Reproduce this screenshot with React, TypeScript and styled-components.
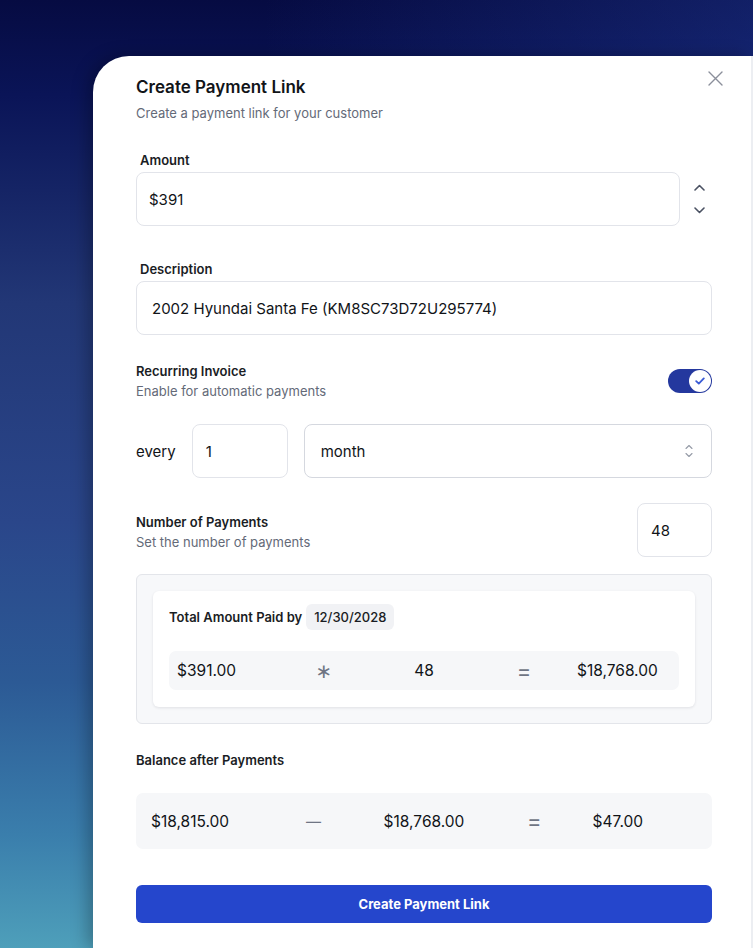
import React from "react";
import styled, { createGlobalStyle } from "styled-components";

const Global = createGlobalStyle`
  html, body {
    margin: 0;
    padding: 0;
  }

  body {
    font-family: Inter, "Noto Sans", sans-serif;
    color: #111418;
  }
`;

const Page = styled.div`
  display: flex;
  box-sizing: border-box;
  height: 948px;
  overflow: hidden;
  padding: 56px 0 0 93px;

  background: linear-gradient(90deg, rgba(10, 20, 60, 0) 35%, rgba(40, 70, 170, 0.35) 100%),
    linear-gradient(180deg, #060b42 0%, #0a1457 10%, #223776 32%, #2a468a 55%, #2c5a95 72%, #3a7eac 88%, #4e9fba 100%);
`;

const Modal = styled.div`
  position: relative;
  flex: 1;
  padding: 20px 39px 0 43px;

  background: #fff;
  border-right: 2px solid #eceef2;
  border-top-left-radius: 36px;
  box-shadow: -6px 0 16px rgba(0, 0, 0, 0.25);
`;

const Close = styled.button`
  position: absolute;
  top: 15px;
  right: 28px;

  display: flex;
  padding: 0;
  border: none;
  background: none;
`;

const Title = styled.div`
  font-size: 17px;
  line-height: 22px;
  font-weight: 600;
  color: #111418;
`;

const Subtitle = styled.div`
  margin-top: 6px;

  font-size: 13px;
  line-height: 18px;
  color: #646a78;
`;

const Label = styled.div<{ $top: number; $indent?: boolean }>`
  margin-top: ${(p) => p.$top}px;
  margin-bottom: 3px;
  padding-left: ${(p) => (p.$indent ? 4 : 0)}px;

  font-size: 13px;
  line-height: 18px;
  font-weight: 600;
  color: #1a1d24;
`;

const Row = styled.div<{ $top?: number; $gap?: number }>`
  display: flex;
  align-items: center;
  justify-content: space-between;
  gap: ${(p) => p.$gap ?? 0}px;
  margin-top: ${(p) => p.$top ?? 0}px;
`;

const Box = styled.div<{ $pad: number; $width?: number; $strong?: boolean }>`
  display: flex;
  align-items: center;
  justify-content: space-between;
  box-sizing: border-box;
  flex: ${(p) => (p.$width ? "none" : 1)};
  width: ${(p) => (p.$width ? `${p.$width}px` : "auto")};
  height: 54px;
  padding: 0 18px 0 ${(p) => p.$pad}px;

  border: 1px solid ${(p) => (p.$strong ? "#d5d8df" : "#e2e4ea")};
  border-radius: 8px;
  font-size: 15px;
  color: #111418;
`;

const Stepper = styled.div`
  display: flex;
  flex-direction: column;
  align-items: center;
  gap: 16px;
  width: 32px;
  padding-left: 7px;
  box-sizing: border-box;
`;

const TextBlock = styled.div<{ $shift?: number }>`
  display: flex;
  flex-direction: column;
  margin-top: ${(p) => p.$shift ?? 0}px;
`;

const BlockTitle = styled.div`
  font-size: 13px;
  line-height: 20px;
  font-weight: 600;
  color: #1a1d24;
`;

const BlockText = styled.div`
  font-size: 13px;
  line-height: 20px;
  color: #646a78;
`;

const Toggle = styled.div`
  display: flex;
  align-items: center;
  justify-content: flex-end;
  box-sizing: border-box;
  width: 44px;
  height: 24px;
  padding: 1px;

  border-radius: 12px;
  background: #24389e;
`;

const Knob = styled.div`
  display: flex;
  align-items: center;
  justify-content: center;
  width: 22px;
  height: 22px;

  border-radius: 50%;
  background: #fff;
`;

const Every = styled.span`
  font-size: 15px;
  color: #111418;
`;

const Summary = styled.div`
  margin-top: 17px;
  padding: 16px;

  background: #f7f8fa;
  border: 1px solid #e3e5ea;
  border-radius: 6px;
`;

const Card = styled.div`
  padding: 13px 16px 17px;

  background: #fff;
  border-radius: 6px;
  box-shadow: 0 1px 3px rgba(16, 24, 40, 0.1);
`;

const CardHead = styled.div`
  display: flex;
  align-items: center;
  gap: 4px;

  font-size: 13px;
  font-weight: 600;
  color: #1a1d24;
`;

const Chip = styled.span`
  display: inline-flex;
  align-items: center;
  height: 26px;
  padding: 0 8px;

  background: #f1f2f5;
  border-radius: 6px;
  font-weight: 500;
`;

const CalcRow = styled.div<{ $h: number; $px: number; $top: number }>`
  display: grid;
  grid-template-columns: repeat(5, 1fr);
  align-items: center;
  height: ${(p) => p.$h}px;
  margin-top: ${(p) => p.$top}px;
  padding: 0 ${(p) => p.$px}px;

  background: #f6f7f9;
  border-radius: 7px;
`;

const Value = styled.span<{ $edge?: boolean }>`
  justify-self: ${(p) => (p.$edge ? "start" : "center")};
  padding-left: ${(p) => (p.$edge ? 3 : 0)}px;

  font-size: 15.5px;
  color: #111418;
`;

const Op = styled.span<{ $glyph?: boolean; $size?: number }>`
  justify-self: center;

  font-family: ${(p) => (p.$glyph ? '"DejaVu Sans", sans-serif' : "Inter, sans-serif")};
  font-size: ${(p) => p.$size ?? 22}px;
  line-height: 1;
  color: #6f7584;
`;

const Submit = styled.button`
  width: 100%;
  height: 38px;
  margin-top: 36px;

  border: none;
  border-radius: 6px;
  background: #2546cc;
  color: #fff;
  font-family: Inter, sans-serif;
  font-size: 13px;
  font-weight: 650;
`;

const Chevron = ({ up }: { up?: boolean }) => (
  <svg width="11" height="7" viewBox="0 0 11 7">
    <path
      d={up ? "M1 6 L5.5 1.5 L10 6" : "M1 1 L5.5 5.5 L10 1"}
      fill="none"
      stroke="#4b5263"
      strokeWidth="1.6"
      strokeLinecap="round"
      strokeLinejoin="round"
    />
  </svg>
);

export default function App() {
  return (
    <Page>
      <Global />
      <Modal>
        <Close aria-label="close">
          <svg width="15" height="15" viewBox="0 0 15 15">
            <path d="M1 1 L14 14 M14 1 L1 14" stroke="#8b8f9b" strokeWidth="1.4" strokeLinecap="round" />
          </svg>
        </Close>

        <Title>Create Payment Link</Title>
        <Subtitle>Create a payment link for your customer</Subtitle>

        <Label $top={29} $indent>
          Amount
        </Label>
        <Row>
          <Box $pad={12}>$391</Box>
          <Stepper>
            <Chevron up />
            <Chevron />
          </Stepper>
        </Row>

        <Label $top={34} $indent>
          Description
        </Label>
        <Row>
          <Box $pad={15}>2002 Hyundai Santa Fe (KM8SC73D72U295774)</Box>
        </Row>

        <Row $top={26}>
          <TextBlock>
            <BlockTitle>Recurring Invoice</BlockTitle>
            <BlockText>Enable for automatic payments</BlockText>
          </TextBlock>
          <Toggle>
            <Knob>
              <svg width="10" height="8" viewBox="0 0 10 8">
                <path d="M1.2 4.2 L3.8 6.6 L8.8 1.4" fill="none" stroke="#3a5bd6" strokeWidth="1.8" strokeLinecap="round" strokeLinejoin="round" />
              </svg>
            </Knob>
          </Toggle>
        </Row>

        <Row $top={23} $gap={16}>
          <Every>every</Every>
          <Box $pad={13} $width={96}>
            1
          </Box>
          <Box $pad={16} $strong>
            month
            <svg width="8" height="14" viewBox="0 0 8 14">
              <path d="M1 4.5 L4 1.5 L7 4.5 M1 9.5 L4 12.5 L7 9.5" fill="none" stroke="#959ba7" strokeWidth="1.1" strokeLinecap="round" strokeLinejoin="round" />
            </svg>
          </Box>
        </Row>

        <Row $top={25}>
          <TextBlock $shift={4}>
            <BlockTitle>Number of Payments</BlockTitle>
            <BlockText>Set the number of payments</BlockText>
          </TextBlock>
          <Box $pad={13} $width={75}>
            48
          </Box>
        </Row>

        <Summary>
          <Card>
            <CardHead>
              Total Amount Paid by
              <Chip>12/30/2028</Chip>
            </CardHead>
            <CalcRow $h={39} $px={5} $top={21}>
              <Value $edge>$391.00</Value>
              <Op $glyph $size={20}>∗</Op>
              <Value>48</Value>
              <Op>=</Op>
              <Value $edge>$18,768.00</Value>
            </CalcRow>
          </Card>
        </Summary>

        <Label $top={27}>Balance after Payments</Label>
        <CalcRow $h={56} $px={12} $top={24}>
          <Value $edge>$18,815.00</Value>
          <Op $size={15}>—</Op>
          <Value>$18,768.00</Value>
          <Op>=</Op>
          <Value $edge>$47.00</Value>
        </CalcRow>

        <Submit>Create Payment Link</Submit>
      </Modal>
    </Page>
  );
}
